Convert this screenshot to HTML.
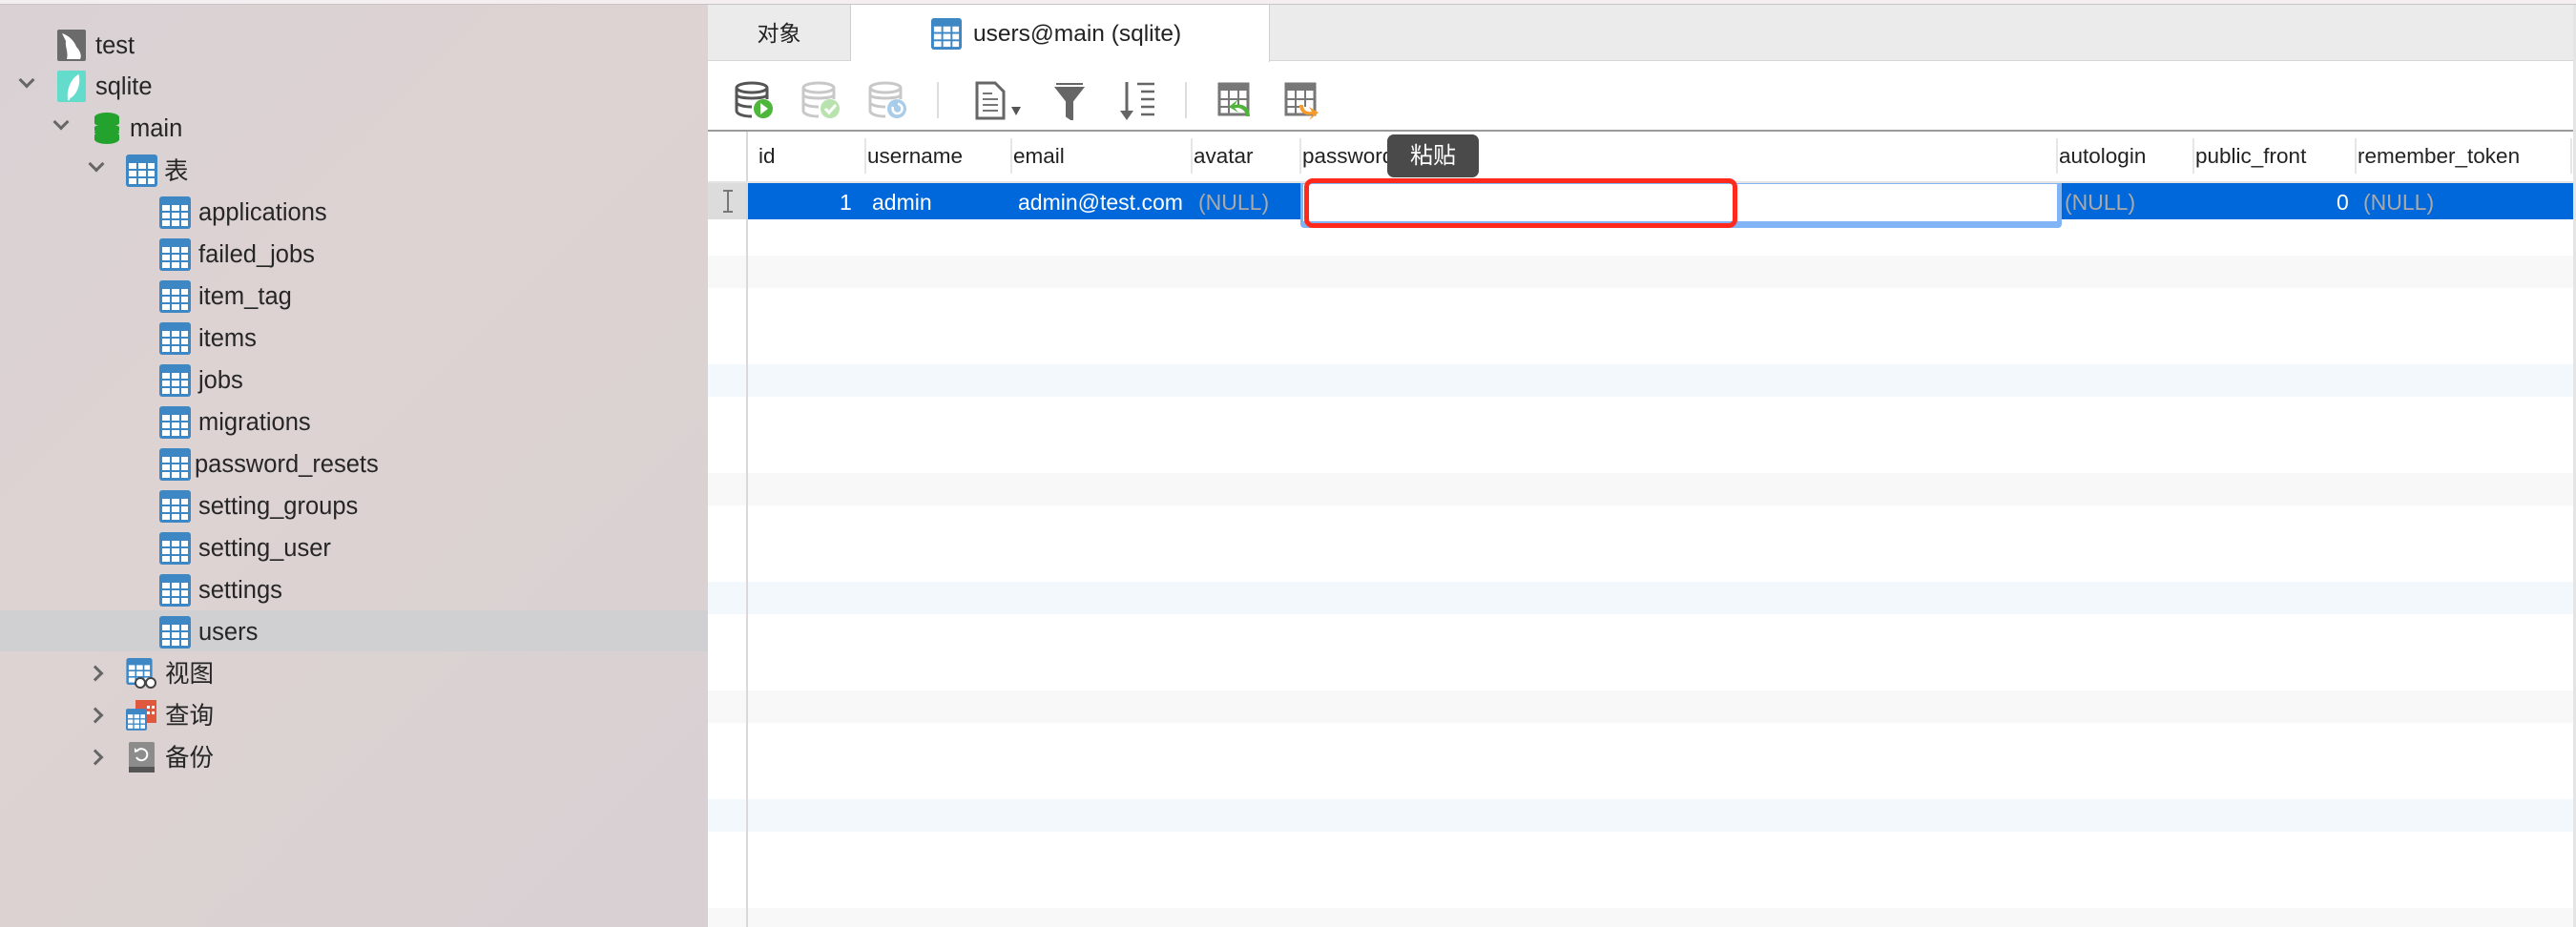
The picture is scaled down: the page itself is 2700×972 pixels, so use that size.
<!DOCTYPE html>
<html><head><meta charset="utf-8"><style>
*{margin:0;padding:0;box-sizing:border-box}
body{width:2700px;height:972px;overflow:hidden;position:relative;background:#fff;font-family:"Liberation Sans","Noto Sans CJK SC",sans-serif;color:#222}
.a{position:absolute}
#side{left:0;top:0;width:742px;height:972px;background:linear-gradient(135deg,#d9d1d4 0%,#ddd3d2 40%,#d8d0d3 100%)}
.it{position:absolute;height:44px;line-height:46px;font-size:25.5px;color:#262626;white-space:nowrap}
.chev{position:absolute;width:12px;height:12px;border-right:3px solid #666;border-bottom:3px solid #666}
.tbl{position:absolute;width:33px;height:34px}
.hd{position:absolute;top:137px;height:53px;line-height:54px;font-size:22.5px;color:#222;padding-left:8px}
.dv{position:absolute;top:145px;width:2px;height:37px;background:#e6e6e6}
.cell{position:absolute;top:192px;height:38px;line-height:40px;font-size:23px;color:#fff}
.nul{color:#a9a9a9}
</style></head><body>
<svg width="0" height="0" style="position:absolute"><defs>
<symbol id="tb" viewBox="0 0 33 34"><rect x="0" y="0" width="33" height="34" rx="3" fill="#3d87c5"/><g fill="#fff"><rect x="3" y="9" width="8" height="6"/><rect x="13" y="9" width="8" height="6"/><rect x="23" y="9" width="7" height="6"/><rect x="3" y="17" width="8" height="6"/><rect x="13" y="17" width="8" height="6"/><rect x="23" y="17" width="7" height="6"/><rect x="3" y="25" width="8" height="6"/><rect x="13" y="25" width="8" height="6"/><rect x="23" y="25" width="7" height="6"/></g></symbol>
</defs></svg>
<div class="a" style="left:0;top:0;width:2700px;height:5px;background:#f5eef0;border-bottom:1px solid #c9c4c6"></div>
<div id="side" class="a" style="top:5px;height:967px"></div>
<div class="a" style="left:0;top:640px;width:742px;height:43px;background:#d0cfd1"></div>
<div class="a" style="left:60px;top:31px;width:30px;height:33px;background:#6b6b6b;border-radius:2px"><svg width="30" height="33"><path d="M5 4 C12 6 18 12 20 18 C24 22 26 28 24 31 L10 31 C12 24 8 18 9 12 Z" fill="#fff"/></svg></div>
<div class="it" style="left:100px;top:25px">test</div>
<div class="chev" style="left:22px;top:78px;transform:rotate(45deg)"></div>
<div class="a" style="left:60px;top:74px;width:30px;height:33px;background:#63dccb;border-radius:2px"><svg width="30" height="33"><path d="M12 31 C10 22 14 10 22 5 C24 14 20 24 14 28 M12 31 L18 14" fill="#fff" stroke="#fff" stroke-width="1.5"/></svg></div>
<div class="it" style="left:100px;top:68px">sqlite</div>
<div class="chev" style="left:58px;top:122px;transform:rotate(45deg)"></div>
<svg class="a" style="left:98px;top:118px" width="28" height="33"><g fill="#24a22e"><ellipse cx="14" cy="5" rx="13" ry="5"/><rect x="1" y="5" width="26" height="6"/><ellipse cx="14" cy="11" rx="13" ry="4"/><rect x="1" y="14" width="26" height="6" rx="2"/><ellipse cx="14" cy="21" rx="13" ry="4"/><rect x="1" y="23" width="26" height="6"/><ellipse cx="14" cy="28" rx="13" ry="5"/></g></svg>
<div class="it" style="left:136px;top:112px">main</div>
<div class="chev" style="left:95px;top:166px;transform:rotate(45deg)"></div>
<svg class="tbl" style="left:132px;top:162px"><use href="#tb"/></svg>
<div class="it" style="left:172px;top:157px">表</div>
<svg class="tbl" style="left:167px;top:206px"><use href="#tb"/></svg><div class="it" style="left:208px;top:200px">applications</div>
<svg class="tbl" style="left:167px;top:250px"><use href="#tb"/></svg><div class="it" style="left:208px;top:244px">failed_jobs</div>
<svg class="tbl" style="left:167px;top:294px"><use href="#tb"/></svg><div class="it" style="left:208px;top:288px">item_tag</div>
<svg class="tbl" style="left:167px;top:338px"><use href="#tb"/></svg><div class="it" style="left:208px;top:332px">items</div>
<svg class="tbl" style="left:167px;top:382px"><use href="#tb"/></svg><div class="it" style="left:208px;top:376px">jobs</div>
<svg class="tbl" style="left:167px;top:426px"><use href="#tb"/></svg><div class="it" style="left:208px;top:420px">migrations</div>
<svg class="tbl" style="left:167px;top:470px"><use href="#tb"/></svg><div class="it" style="left:204px;top:464px">password_resets</div>
<svg class="tbl" style="left:167px;top:514px"><use href="#tb"/></svg><div class="it" style="left:208px;top:508px">setting_groups</div>
<svg class="tbl" style="left:167px;top:558px"><use href="#tb"/></svg><div class="it" style="left:208px;top:552px">setting_user</div>
<svg class="tbl" style="left:167px;top:602px"><use href="#tb"/></svg><div class="it" style="left:208px;top:596px">settings</div>
<svg class="tbl" style="left:167px;top:646px"><use href="#tb"/></svg><div class="it" style="left:208px;top:640px">users</div>
<div class="chev" style="left:94px;top:700px;transform:rotate(-45deg)"></div>
<svg class="a" style="left:132px;top:690px" width="32" height="32"><use href="#tb" width="28" height="28"/><circle cx="15" cy="26" r="5" fill="#fff" stroke="#444" stroke-width="2"/><circle cx="26" cy="26" r="5" fill="#fff" stroke="#444" stroke-width="2"/></svg>
<div class="it" style="left:173px;top:684px">视图</div>
<div class="chev" style="left:94px;top:744px;transform:rotate(-45deg)"></div>
<svg class="a" style="left:132px;top:734px" width="33" height="33"><rect x="10" y="0" width="22" height="24" fill="#e0593e"/><g fill="#fff"><rect x="22" y="6" width="3" height="3"/><rect x="27" y="6" width="3" height="3"/><rect x="22" y="12" width="3" height="3"/><rect x="27" y="12" width="3" height="3"/></g><use href="#tb" x="0" y="8" width="22" height="25"/></svg>
<div class="it" style="left:173px;top:728px">查询</div>
<div class="chev" style="left:94px;top:788px;transform:rotate(-45deg)"></div>
<svg class="a" style="left:135px;top:778px" width="27" height="32"><rect width="27" height="32" rx="2" fill="#8c8c8c"/><rect y="26" width="27" height="6" fill="#555"/><path d="M9 9 A6 6 0 1 1 8 16" fill="none" stroke="#fff" stroke-width="2"/><path d="M6 6 L10 10 L6 11 Z" fill="#fff"/></svg>
<div class="it" style="left:173px;top:772px">备份</div>

<div class="a" style="left:742px;top:5px;width:1958px;height:59px;background:#ebebeb;border-bottom:1px solid #d6d6d6"></div>
<div class="a" style="left:742px;top:5px;width:150px;height:59px;border-right:1px solid #cfcfcf;line-height:60px;text-align:center;font-size:23px">对象</div>
<div class="a" style="left:892px;top:5px;width:439px;height:60px;background:#fff;border-right:1px solid #cfcfcf"></div>
<svg class="a" style="left:976px;top:19px" width="32" height="33"><use href="#tb"/></svg>
<div class="a" style="left:1020px;top:5px;line-height:61px;font-size:24.5px">users@main (sqlite)</div>
<div class="a" style="left:2697px;top:5px;width:3px;height:967px;background:#e4e4e4"></div>

<div class="a" style="left:742px;top:136px;width:1955px;height:2px;background:#9a9a9a"></div>
<svg class="a" style="left:768px;top:84px" width="1120" height="42" viewBox="768 84 1120 42">
<g fill="none" stroke="#555" stroke-width="3"><ellipse cx="788" cy="92" rx="16" ry="5"/><path d="M772 92 V116 C772 120 780 122 788 122 M772 100 C776 104 800 104 804 100 M772 108 C776 112 784 112 788 112 M804 92 V104"/></g>
<circle cx="800" cy="114" r="10" fill="#4fb63c"/><path d="M797 108 L805 114 L797 120 Z" fill="#fff"/>
<g fill="none" stroke="#c8c8c8" stroke-width="3"><ellipse cx="858" cy="92" rx="16" ry="5"/><path d="M842 92 V116 C842 120 850 122 858 122 M842 100 C846 104 870 104 874 100 M842 108 C846 112 854 112 858 112 M874 92 V104"/></g>
<circle cx="870" cy="114" r="10" fill="#b9e3ae"/><path d="M865 114 L869 118 L876 110" fill="none" stroke="#fff" stroke-width="3"/>
<g fill="none" stroke="#c8c8c8" stroke-width="3"><ellipse cx="928" cy="92" rx="16" ry="5"/><path d="M912 92 V116 C912 120 920 122 928 122 M912 100 C916 104 940 104 944 100 M912 108 C916 112 924 112 928 112 M944 92 V104"/></g>
<circle cx="940" cy="114" r="10" fill="#a9cce8"/><path d="M936 112 A5 5 0 1 0 941 109" fill="none" stroke="#fff" stroke-width="2.5"/>
<rect x="982" y="86" width="2" height="38" fill="#ddd"/>
<path d="M1024 87 H1043 L1052 96 V124 H1024 Z" fill="none" stroke="#666" stroke-width="3"/><g stroke="#777" stroke-width="2"><path d="M1030 98H1040M1030 104H1046M1030 110H1046M1030 116H1046"/></g>
<path d="M1060 112 H1070 L1065 121 Z" fill="#555"/>
<path d="M1107 88 H1135 M1107 92 H1135 L1124 106 V126 L1118 122 V106 Z" fill="#666" stroke="#666" stroke-width="2"/>
<path d="M1181 86 V120" stroke="#666" stroke-width="3"/><path d="M1174 116 H1188 L1181 126 Z" fill="#666"/><g stroke="#666" stroke-width="2.5"><path d="M1192 88H1210M1196 96H1210M1196 104H1210M1196 112H1210M1196 120H1210"/></g>
<rect x="1242" y="86" width="2" height="38" fill="#ddd"/>
<rect x="1278" y="88" width="30" height="32" fill="none" stroke="#777" stroke-width="3"/><rect x="1278" y="88" width="30" height="7" fill="#777"/><path d="M1288 95V120M1298 95V112M1278 104H1308M1278 112H1300" stroke="#777" stroke-width="2"/>
<path d="M1310 122 C1310 112 1302 108 1294 110 L1298 104 L1288 112 L1298 118 L1294 113 C1300 112 1306 116 1306 122" fill="#4eb53a"/>
<rect x="1348" y="88" width="30" height="32" fill="none" stroke="#777" stroke-width="3"/><rect x="1348" y="88" width="30" height="7" fill="#777"/><path d="M1358 95V120M1368 95V112M1348 104H1378M1348 112H1362" stroke="#777" stroke-width="2"/>
<path d="M1362 110 C1362 118 1368 122 1376 120 L1372 126 L1382 118 L1372 112 L1375 117 C1370 118 1366 116 1366 110 Z" fill="#f59a2c"/>
</svg>

<div class="a" style="left:742px;top:268px;width:1955px;height:34px;background:#f8f8f8"></div>
<div class="a" style="left:742px;top:382px;width:1955px;height:34px;background:#f3f8fd"></div>
<div class="a" style="left:742px;top:496px;width:1955px;height:34px;background:#f8f8f8"></div>
<div class="a" style="left:742px;top:610px;width:1955px;height:34px;background:#f3f8fd"></div>
<div class="a" style="left:742px;top:724px;width:1955px;height:34px;background:#f8f8f8"></div>
<div class="a" style="left:742px;top:838px;width:1955px;height:34px;background:#f3f8fd"></div>
<div class="a" style="left:742px;top:952px;width:1955px;height:20px;background:#f8f8f8"></div>
<div class="a" style="left:782px;top:138px;width:2px;height:834px;background:#dcd8da"></div>

<div class="hd" style="left:787px">id</div>
<div class="dv" style="left:906px"></div><div class="hd" style="left:901px">username</div>
<div class="dv" style="left:1059px"></div><div class="hd" style="left:1054px">email</div>
<div class="dv" style="left:1248px"></div><div class="hd" style="left:1243px">avatar</div>
<div class="dv" style="left:1362px"></div><div class="hd" style="left:1357px">password</div>
<div class="dv" style="left:2155px"></div><div class="hd" style="left:2150px">autologin</div>
<div class="dv" style="left:2298px"></div><div class="hd" style="left:2293px">public_front</div>
<div class="dv" style="left:2468px"></div><div class="hd" style="left:2463px">remember_token</div>
<div class="dv" style="left:2694px"></div>

<div class="a" style="left:742px;top:190px;width:1955px;height:2px;background:#e4e4e4"></div>
<div class="a" style="left:742px;top:192px;width:40px;height:38px;background:#dcdcdc"></div>
<div class="a" style="left:758px;top:199px;width:10px;height:24px;border-top:2px solid #777;border-bottom:2px solid #777"><div style="margin-left:4px;width:2px;height:20px;background:#777"></div></div>
<div class="a" style="left:784px;top:192px;width:1913px;height:38px;background:#0068da"></div>
<div class="cell" style="left:880px">1</div>
<div class="cell" style="left:914px">admin</div>
<div class="cell" style="left:1067px">admin@test.com</div>
<div class="cell nul" style="left:1256px">(NULL)</div>
<div class="cell nul" style="left:2164px">(NULL)</div>
<div class="cell" style="left:2449px">0</div>
<div class="cell nul" style="left:2477px">(NULL)</div>
<div class="a" style="left:1363px;top:192px;width:798px;height:47px;background:#80b4f4;border-radius:0 0 4px 4px"></div>
<div class="a" style="left:1366px;top:193px;width:790px;height:39px;background:#fff"></div>
<div class="a" style="left:1367px;top:187px;width:454px;height:52px;border:5px solid #ff2a1c;border-radius:9px"></div>
<div class="a" style="left:1454px;top:141px;width:96px;height:45px;background:#4a4a4a;border-radius:7px;color:#fff;font-size:24px;line-height:45px;text-align:center">粘贴</div>
</body></html>
